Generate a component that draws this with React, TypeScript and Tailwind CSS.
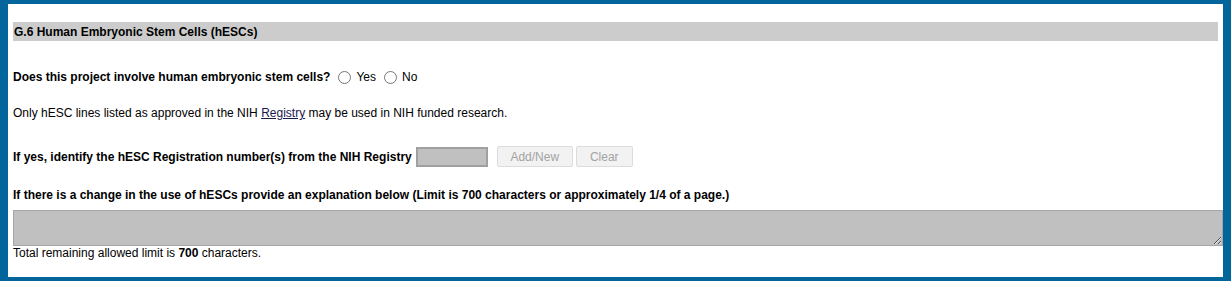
export default function App() {
  return (
    <div className="h-[281px] w-[1231px] overflow-hidden border-x-8 border-y-4 border-[#02659b] bg-white font-['Liberation_Sans',Arial,sans-serif] text-[12px] text-black">
      <div className="px-[5px] pt-[18px]">
        <div className="flex h-[19px] items-center bg-[#cccccc] pl-[1px] font-bold">G.6 Human Embryonic Stem Cells (hESCs)</div>

        <div className="mt-[26px] flex h-[20px] items-center">
          <span className="font-bold">Does this project involve human embryonic stem cells?</span>
          <label className="ml-[8px] flex items-center">
            <input type="radio" name="hesc" className="m-0 h-[13px] w-[13px]" />
            <span className="ml-[5px]">Yes</span>
          </label>
          <label className="ml-[8px] flex items-center">
            <input type="radio" name="hesc" className="m-0 h-[13px] w-[13px]" />
            <span className="ml-[5px]">No</span>
          </label>
        </div>

        <p className="mt-[18px] h-[16px] leading-[16px]">
          Only hESC lines listed as approved in the NIH <a className="text-[#1a1a4e] underline">Registry</a> may be used in NIH funded research.
        </p>

        <div className="mt-[25px] flex h-[21px] items-center">
          <span className="font-bold">If yes, identify the hESC Registration number(s) from the NIH Registry</span>
          <input readOnly className="ml-[4px] h-[20px] w-[72px] border-2 border-[#a0a0a0] bg-[#c0c0c0] outline-none" />
          <button disabled className="ml-[9px] h-[21px] w-[76px] rounded-[2px] border border-[#dcdcdc] bg-[#f2f2f2] text-[12px] text-[#a3a3a3]">Add/New</button>
          <button disabled className="ml-[3px] h-[21px] w-[57px] rounded-[2px] border border-[#dcdcdc] bg-[#f2f2f2] text-[12px] text-[#a3a3a3]">Clear</button>
        </div>

        <div className="mt-[21px] h-[14px] font-bold leading-[14px]">
          If there is a change in the use of hESCs provide an explanation below (Limit is 700 characters or approximately 1/4 of a page.)
        </div>

        <textarea readOnly className="mt-[8px] block h-[36px] w-[1210px] border border-[#a6a6a6] bg-[#c0c0c0] outline-none" />

        <div className="h-[14px] leading-[14px]">
          Total remaining allowed limit is <span className="font-bold">700</span> characters.
        </div>
      </div>
    </div>
  );
}
